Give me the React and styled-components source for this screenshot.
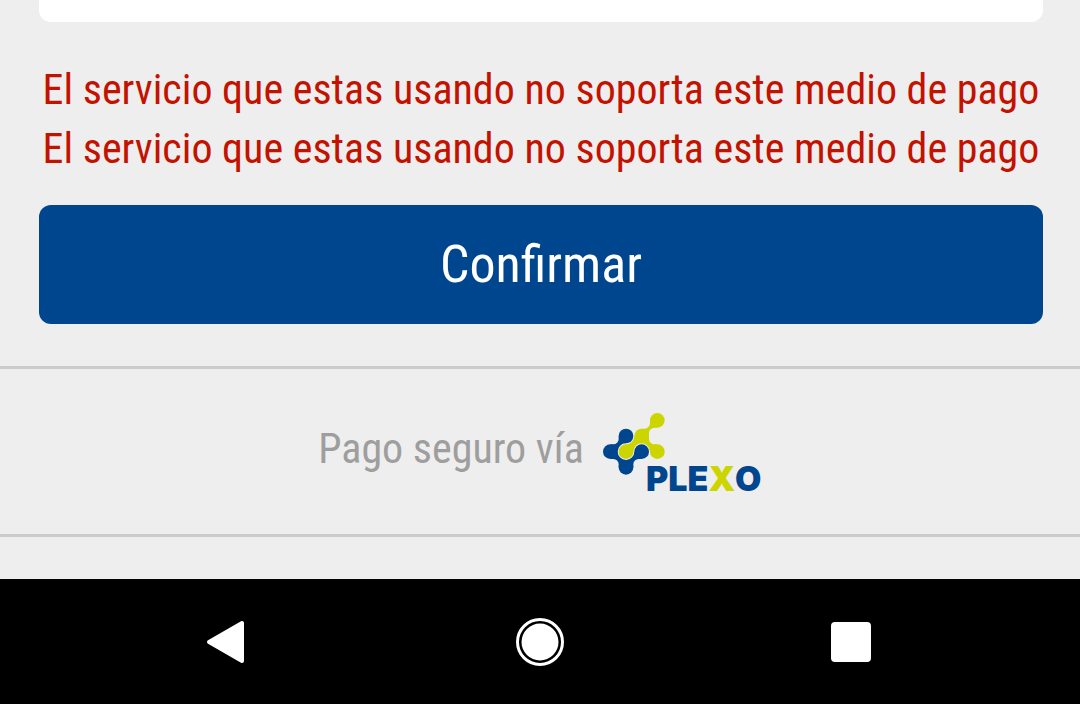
import React from 'react';
import styled, { createGlobalStyle } from 'styled-components';

const GlobalStyle = createGlobalStyle`
    body {
        margin: 0;
        background-color: #eee;
        font-family: "Roboto Condensed", "Liberation Sans Narrow", Roboto, sans-serif;
    }
`;

const Page = styled.div`
    display: flex;
    flex-direction: column;
    min-height: 100vh;
`;

const Content = styled.main`
    display: flex;
    flex-direction: column;
    padding: 0 37px 42px 39px;
`;

const Card = styled.section`
    height: 22px;
    background-color: white;
    border-radius: 0 0 12px 12px;
`;

const Errors = styled.div`
    padding: 38px 0 27px;
    text-align: center;
    white-space: nowrap;
`;

const ErrorText = styled.p`
    margin: 0;
    color: #c41200;
    font-size: 42px;
    line-height: 59px;
`;

const Button = styled.button`
    width: 100%;
    height: 119px;
    padding: 0;
    border: none;
    border-radius: 12px;
    background-color: #00468f;
    color: white;
    font-family: inherit;
    font-size: 52px;
`;

const Secure = styled.footer`
    display: flex;
    align-items: flex-start;
    justify-content: center;
    gap: 19px;
    padding: 42px 0 30px 3px;
    border-top: 3px solid #ccc;
    border-bottom: 3px solid #ccc;
    color: #9e9e9e;
    font-size: 42px;
    line-height: 75px;
`;

const Logo = styled.svg`
    width: 162px;
    height: 93px;
    overflow: visible;
`;

const LogoText = styled.text`
    font-family: Inter, "Open Sans", sans-serif;
    font-size: 102px;
    font-weight: 900;
    line-height: 1;
    fill: #00468f;
`;

const NavBar = styled.nav`
    display: grid;
    grid-template-columns: 1fr auto 1fr;
    align-items: center;
    height: 125px;
    margin-top: auto;
    background-color: black;
`;

const NavButton = styled.button`
    display: flex;
    justify-self: ${({ $side }) => $side || 'center'};
    margin: 0 ${({ $side }) => ($side ? '205px' : '0')};
    padding: 0;
    border: none;
    background: none;
`;

const BLUE = '#00468f';
const GREEN = '#ccd500';
const REACH = 25;
const ROUND = 25;
const TIGHT = 16;

const blueDots = [[108, 108], [61, 155], [108, 202], [155, 155]];
const blueLinks = [
    [0, 1, ROUND, TIGHT],
    [1, 2, TIGHT, ROUND],
    [2, 3, ROUND, TIGHT],
];

const greenDots = [[108, 155], [155, 108], [202, 61], [202, 155]];
const greenLinks = [
    [0, 1, ROUND, ROUND],
    [1, 2, TIGHT, TIGHT],
    [1, 3, ROUND, TIGHT],
];

// neck between two diagonal dots, r1 and r2 are the radii of its two sides
const link = ([x1, y1], [x2, y2], r1, r2) => {
    const dx = Math.sign(x2 - x1);
    const dy = Math.sign(y2 - y1);
    const sx = dx * REACH;
    const sy = dy * REACH;
    const sweep = dx * dy > 0 ? 1 : 0;
    return [
        `M${x1} ${y2 - sy}`,
        `L${x1 + sx - dx * r1} ${y2 - sy}`,
        `A${r1} ${r1} 0 0 ${sweep} ${x1 + sx} ${y2 - sy + dy * r1}`,
        `L${x1 + sx} ${y2}`,
        `L${x2} ${y1 + sy}`,
        `L${x2 - sx + dx * r2} ${y1 + sy}`,
        `A${r2} ${r2} 0 0 ${sweep} ${x2 - sx} ${y1 + sy - dy * r2}`,
        `L${x2 - sx} ${y1}Z`,
    ].join(' ');
};

const Molecule = ({ dots, links, color }) => (
    <g fill={color}>
        {dots.map(([x, y]) => <circle key={`${x}-${y}`} cx={x} cy={y} r="22" />)}
        {links.map(([a, b, r1, r2]) => (
            <path key={`${a}-${b}`} d={link(dots[a], dots[b], r1, r2)} />
        ))}
    </g>
);

const PlexoLogo = () => (
    <Logo viewBox="39 33 486 279" role="img" aria-label="Plexo">
        <Molecule dots={blueDots} links={blueLinks} color={BLUE} />
        <Molecule dots={greenDots} links={greenLinks} color={GREEN} />
        <LogoText x="168" y="274">PLE<tspan fill={GREEN}>X</tspan>O</LogoText>
    </Logo>
);

const messages = [
    'El servicio que estas usando no soporta este medio de pago',
    'El servicio que estas usando no soporta este medio de pago',
];

const App = () => {
    return (
        <Page>
            <GlobalStyle />
            <Content>
                <Card />
                <Errors role="alert">
                    {messages.map((message, index) => (
                        <ErrorText key={index}>{message}</ErrorText>
                    ))}
                </Errors>
                <Button type="button">Confirmar</Button>
            </Content>
            <Secure>
                <span>Pago seguro vía</span>
                <PlexoLogo />
            </Secure>
            <NavBar>
                <NavButton type="button" aria-label="Atrás" $side="start">
                    <svg width="40" height="44" viewBox="0 0 40 44">
                        <path d="M4 22 L37 3 V41Z" fill="white" stroke="white" strokeWidth="4" strokeLinejoin="round" />
                    </svg>
                </NavButton>
                <NavButton type="button" aria-label="Inicio">
                    <svg width="48" height="48" viewBox="0 0 48 48">
                        <circle cx="24" cy="24" r="22.5" fill="none" stroke="white" strokeWidth="3" />
                        <circle cx="24" cy="24" r="18.5" fill="white" />
                    </svg>
                </NavButton>
                <NavButton type="button" aria-label="Recientes" $side="end">
                    <svg width="48" height="48" viewBox="0 0 48 48">
                        <rect x="4" y="4" width="40" height="40" rx="4" fill="white" />
                    </svg>
                </NavButton>
            </NavBar>
        </Page>
    );
};

export default App;
